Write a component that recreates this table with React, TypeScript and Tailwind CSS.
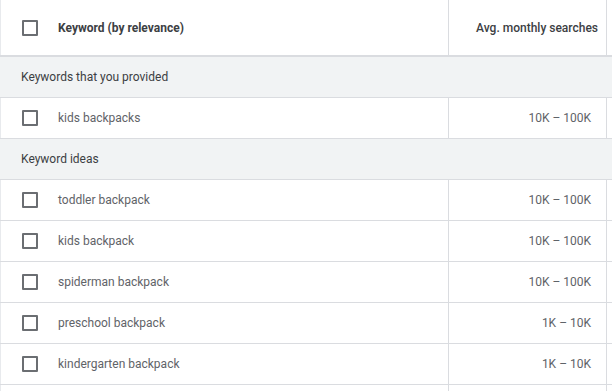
import React from 'react'

type Row = { keyword: string; searches: string }

const provided: Row[] = [{ keyword: 'kids backpacks', searches: '10K – 100K' }]

const ideas: Row[] = [
  { keyword: 'toddler backpack', searches: '10K – 100K' },
  { keyword: 'kids backpack', searches: '10K – 100K' },
  { keyword: 'spiderman backpack', searches: '10K – 100K' },
  { keyword: 'preschool backpack', searches: '1K – 10K' },
  { keyword: 'kindergarten backpack', searches: '1K – 10K' },
]

function Checkbox() {
  return <span className="block h-[16px] w-[16px] shrink-0 rounded-[1px] border-2 border-[#6b6e72]" />
}

function GroupRow({ label }: { label: string }) {
  return (
    <div className="flex h-[41px] items-center border-b border-[#dadce0] bg-[#f1f3f4] pl-[21px] text-[12px] text-[#3c4043]">
      {label}
    </div>
  )
}

function KeywordRow({ row }: { row: Row }) {
  return (
    <div className="grid h-[41px] grid-cols-[448px_159px_1fr] border-b border-[#dadce0]">
      <div className="flex items-center gap-[20px] border-l border-[#e8eaed] pl-[21px] text-[12px] text-[#5f6368]">
        <Checkbox />
        <span>{row.keyword}</span>
      </div>
      <div className="flex items-center justify-end border-x border-[#dadce0] pr-[15px] text-[12px] text-[#5f6368]">
        {row.searches}
      </div>
      <div />
    </div>
  )
}

export default function App() {
  return (
    <div className="h-[391px] w-[612px] overflow-hidden bg-white font-['Roboto',sans-serif]">
      <div className="grid h-[57px] grid-cols-[448px_159px_1fr] border-b-2 border-[#dadce0]">
        <div className="flex items-center gap-[20px] border-l border-[#e8eaed] pl-[21px] text-[12px] font-bold text-[#3c4043]">
          <Checkbox />
          <span>Keyword (by relevance)</span>
        </div>
        <div className="flex items-center justify-end border-x border-[#dadce0] pr-[8px] text-[12px] font-medium text-[#3c4043]">
          Avg. monthly searches
        </div>
        <div />
      </div>
      <GroupRow label="Keywords that you provided" />
      {provided.map((r) => (
        <KeywordRow key={r.keyword} row={r} />
      ))}
      <GroupRow label="Keyword ideas" />
      {ideas.map((r) => (
        <KeywordRow key={r.keyword} row={r} />
      ))}
      <div className="grid h-[20px] grid-cols-[448px_159px_1fr]">
        <div className="border-l border-[#e8eaed]" />
        <div className="border-x border-[#dadce0]" />
        <div />
      </div>
    </div>
  )
}
